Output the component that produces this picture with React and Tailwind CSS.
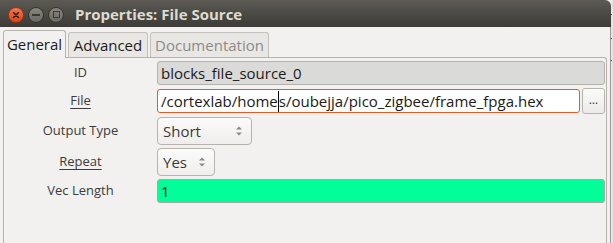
import React from "react";

function Spin() {
  return (
    <svg width="8" height="12" viewBox="0 0 8 12" className="shrink-0">
      <path d="M1 4.5 L4 1.5 L7 4.5 Z" fill="#8a8884" />
      <path d="M1 7.5 L4 10.5 L7 7.5 Z" fill="#8a8884" />
    </svg>
  );
}

function Label({ children, underline }) {
  return (
    <div className="w-[153px] shrink-0 flex items-center justify-center text-[13px] text-[#3c3c3c]">
      <span className={underline ? "underline underline-offset-[3px] decoration-[1px]" : ""}>{children}</span>
    </div>
  );
}

export default function App() {
  const font = { fontFamily: '"Open Sans", "Noto Sans", sans-serif' };
  return (
    <div className="w-[613px] h-[243px] flex bg-[#f0efed] overflow-hidden" style={font}>
      <div className="w-[611px] h-full flex flex-col">
        {/* title bar */}
        <div className="h-[27px] shrink-0 rounded-tr-[6px] bg-gradient-to-b from-[#5c5a53] to-[#3c3b37] flex items-center pl-[8px]">
          <div className="flex items-center gap-[4px] mt-[2px]">
            <div className="w-[16px] h-[16px] rounded-full bg-gradient-to-b from-[#f4774c] to-[#d9431a] border border-[#9a3414] flex items-center justify-center">
              <svg width="8" height="8" viewBox="0 0 8 8">
                <path d="M1.5 1.5 L6.5 6.5 M6.5 1.5 L1.5 6.5" stroke="#3a1c10" strokeWidth="1.6" strokeLinecap="round" />
              </svg>
            </div>
            <div className="w-[16px] h-[16px] rounded-full bg-gradient-to-b from-[#8a877f] to-[#6a6862] border border-[#34332f] flex items-center justify-center">
              <div className="w-[8px] h-[2px] bg-[#3a3935]" />
            </div>
            <div className="w-[16px] h-[16px] rounded-full bg-gradient-to-b from-[#8a877f] to-[#6a6862] border border-[#34332f] flex items-center justify-center">
              <div className="w-[7px] h-[7px] border-[1.5px] border-[#3a3935]" />
            </div>
          </div>
          <div className="ml-[11px] mt-[1px] text-[15px] font-bold text-[#dfdbd2] leading-none">Properties: File Source</div>
        </div>
        {/* body */}
        <div className="flex-1 bg-[#f2f1f0] border-r border-[#9c9a97] pl-[3px] pr-[3px] pt-[3px] flex flex-col">
          {/* tabs */}
          <div className="flex items-end h-[27px] relative z-10">
            <div className="h-[28px] w-[63px] border border-b-0 border-[#b7b4af] rounded-t-[3px] bg-[#f2f1f0] flex items-center justify-center text-[15px] text-[#1c1c1c] -mb-[1px]">General</div>
            <div className="h-[25px] w-[80px] ml-[2px] border border-b-0 border-[#c3c0bb] rounded-t-[3px] bg-[#e9e7e4] flex items-center justify-center text-[15px] text-[#1c1c1c]">Advanced</div>
            <div className="h-[25px] w-[119px] ml-[2px] border border-b-0 border-[#c3c0bb] rounded-t-[3px] bg-[#e9e7e4] flex items-center justify-center text-[15px] text-[#8d8b88]">Documentation</div>
          </div>
          {/* panel */}
          <div className="flex-1 border border-b-0 border-[#b7b4af] rounded-tr-[3px] flex flex-col pt-[3px] pr-[1px]">
            <div className="flex h-[24px]">
              <Label>ID</Label>
              <div className="flex-1 border border-[#b5b2ad] rounded-[3px] bg-[#dadad8] flex items-center pl-[3px] text-[15px] text-[#1a1a1a]">blocks_file_source_0</div>
            </div>
            <div className="flex h-[24px] mt-[4px]">
              <Label underline>File</Label>
              <div className="flex-1 border border-[#e55b26] rounded-[3px] bg-white flex items-center pl-[3px] text-[15px] text-[#1a1a1a] whitespace-nowrap overflow-hidden">
                <span>/cortexlab/home</span>
                <span className="inline-block w-[1px] h-[21px] bg-black" />
                <span>s/oubejja/pico_zigbee/frame_fpga.hex</span>
              </div>
              <div className="w-[23px] h-[26px] -mt-[1px] ml-[2px] border border-[#b7b4af] rounded-[3px] bg-gradient-to-b from-[#fbfbfa] to-[#ecebe9] flex items-center justify-center text-[12px] text-[#3c3c3c] pb-[2px]">…</div>
            </div>
            <div className="flex h-[28px] mt-[4px]">
              <Label>Output Type</Label>
              <div className="w-[95px] border border-[#b7b4af] rounded-[4px] bg-gradient-to-b from-[#fbfbfa] to-[#efeeec] flex items-center justify-between pl-[5px] pr-[8px] text-[15px] text-[#3a3a3a]">
                <span>Short</span>
                <Spin />
              </div>
            </div>
            <div className="flex h-[28px] mt-[3px]">
              <Label underline>Repeat</Label>
              <div className="w-[58px] border border-[#b7b4af] rounded-[4px] bg-gradient-to-b from-[#fbfbfa] to-[#efeeec] flex items-center justify-between pl-[5px] pr-[8px] text-[15px] text-[#3a3a3a]">
                <span>Yes</span>
                <Spin />
              </div>
            </div>
            <div className="flex h-[24px] mt-[3px]">
              <Label>Vec Length</Label>
              <div className="flex-1 border border-[#a9a7a3] rounded-[3px] bg-[#00ff99] flex items-center pl-[3px] text-[15px] text-[#1a1a1a]">1</div>
            </div>
          </div>
        </div>
      </div>
      <div className="w-[2px] h-full bg-[#e6e5e3] flex flex-col">
        <div className="h-[14px]" />
        <div className="w-[1px] h-[1px] bg-[#444]" />
        <div className="h-[23px]" />
        <div className="w-[1px] h-[1px] bg-[#444]" />
        <div className="h-[21px]" />
        <div className="w-[1px] h-[1px] bg-[#444]" />
      </div>
    </div>
  );
}
